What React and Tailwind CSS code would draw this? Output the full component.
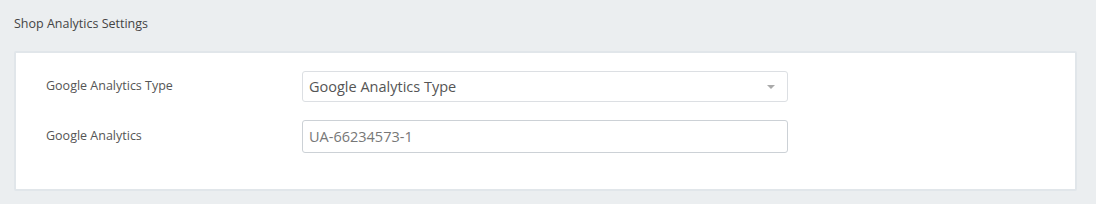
export default function App() {
  return (
    <div className="w-[1096px] h-[204px] bg-[#ebeef0] pt-[14px] pl-[14px] pr-[19px]" style={{ fontFamily: '"Open Sans", sans-serif' }}>
      <div className="text-[12.5px] leading-[20px] text-[#444] h-[37px]">Shop Analytics Settings</div>
      <div className="bg-white border-2 border-[#e1e6ea] rounded-[2px] h-[140px] pl-[30px] pt-[18px]">
        <div className="flex items-center h-[31px]">
          <div className="w-[256px] text-[12.5px] text-[#555]">Google Analytics Type</div>
          <div className="w-[486px] h-[31px] border border-[#dcdfe3] rounded-[3px] flex items-center justify-between pl-[6px] pr-[12px] text-[14.5px] text-[#555]">
            <span>Google Analytics Type</span>
            <span className="w-0 h-0 border-l-[4px] border-r-[4px] border-t-[4px] border-l-transparent border-r-transparent border-t-[#aaa]"></span>
          </div>
        </div>
        <div className="flex items-center h-[33px] mt-[18px]">
          <div className="w-[256px] text-[12.5px] text-[#555]">Google Analytics</div>
          <div className="w-[486px] h-[33px] border border-[#ccd1d6] rounded-[3px] flex items-center pl-[6px] text-[14.5px] text-[#777]">
            UA-66234573-1
          </div>
        </div>
      </div>
    </div>
  );
}
